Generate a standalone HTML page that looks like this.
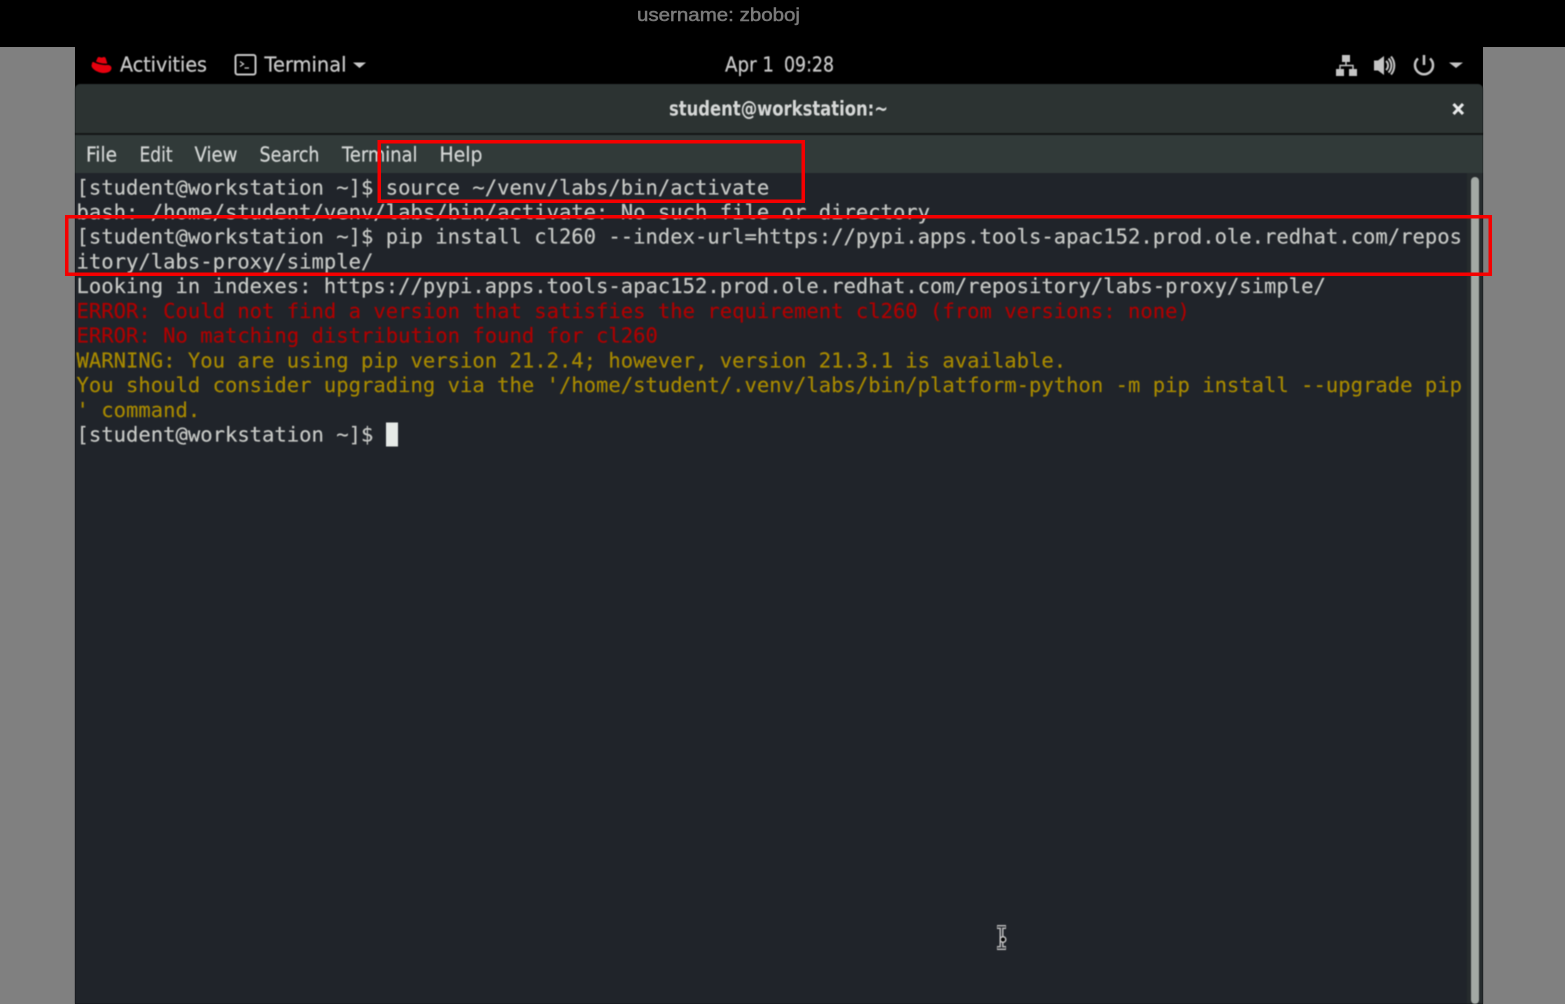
<!DOCTYPE html>
<html lang="en">
<head>
<meta charset="utf-8">
<title>Terminal</title>
<style>
html,body{margin:0;padding:0;background:#000;width:1565px;height:1004px;overflow:hidden}
svg{display:block;position:absolute;left:0;top:0}
.m{font-family:"DejaVu Sans Mono","Liberation Mono",monospace;font-size:20.55px;white-space:pre;stroke-width:.2px}
.u{font-family:"DejaVu Sans","Liberation Sans",sans-serif;font-size:20px;stroke-width:.25px}
</style>
</head>
<body>
<svg width="1565" height="1004" viewBox="0 0 1565 1004" xmlns="http://www.w3.org/2000/svg">
<defs><filter id="b" x="-2%" y="-2%" width="104%" height="104%" color-interpolation-filters="sRGB"><feGaussianBlur stdDeviation="0.45"/></filter></defs>
<rect width="1565" height="1004" fill="#000"/>
<rect x="0" y="47" width="75" height="957" fill="#808080"/>
<rect x="1483" y="47" width="82" height="957" fill="#808080"/>
<rect x="75" y="47" width="1408" height="957" fill="#000"/>
<text x="637" y="21" font-family="'Liberation Sans',sans-serif" font-size="18.4" fill="#7a7a7a" stroke="#7a7a7a" stroke-width=".5" textLength="163" lengthAdjust="spacingAndGlyphs">username: zboboj</text>
<g filter="url(#b)">
<path d="M80 84H1478a5 5 0 0 1 5 5V134H75V89a5 5 0 0 1 5-5Z" fill="#2c3332"/>
<rect x="75" y="133" width="1408" height="2" fill="#141717"/>
<rect x="75" y="135" width="1408" height="38" fill="#313a39"/>
<rect x="75" y="173" width="1408" height="831" fill="#20242a"/>
<rect x="1467" y="173" width="16" height="831" fill="#262b2d"/>
<rect x="1471" y="177" width="8" height="827" rx="4" fill="#a3a9a5"/>
<!-- top bar -->
<path d="M92 63.500C92 62 93 61.500 94.500 62.500C96 63.500 103 65.500 107 65C109.500 64.700 111.500 66 111.500 68C111.500 71.300 108 73 104 73C98 73 91.500 69 91.500 65.500Z" fill="#e6000e"/>
<path d="M96 61.500L97.500 58C98 56.800 99 56.700 100.200 57.300C101.200 57.800 102 57.800 103 57.300C104.500 56.700 105.300 57.200 105.800 58.500L107.300 63.500C103 64 99 63 96 61.500Z" fill="#e6000e"/>
<text class="u" x="120" y="71.500" fill="#c8c8c8" stroke="#c8c8c8" textLength="87" lengthAdjust="spacingAndGlyphs">Activities</text>
<rect x="235.500" y="55" width="20" height="19.500" rx="2" fill="none" stroke="#c4c4c4" stroke-width="2"/>
<path d="M240 61.500L243.500 64L240 66.500" fill="none" stroke="#c4c4c4" stroke-width="1.300"/>
<path d="M244.500 68H249" fill="none" stroke="#c4c4c4" stroke-width="1.300"/>
<text class="u" x="264.500" y="71.500" fill="#c8c8c8" stroke="#c8c8c8" textLength="82" lengthAdjust="spacingAndGlyphs">Terminal</text>
<path d="M353 62.500H366L359.500 68Z" fill="#c8c8c8"/>
<text class="u" x="725" y="71.500" fill="#c8c8c8" stroke="#c8c8c8" textLength="49" lengthAdjust="spacingAndGlyphs">Apr 1</text>
<text class="u" x="784" y="71.500" fill="#c8c8c8" stroke="#c8c8c8" textLength="50" lengthAdjust="spacingAndGlyphs">09:28</text>
<rect x="1342" y="55" width="8" height="7" fill="#c4c4c4"/>
<rect x="1336" y="69" width="8" height="7" fill="#c4c4c4"/>
<rect x="1349" y="69" width="8" height="7" fill="#c4c4c4"/>
<path d="M1346 62V66M1340 69.500V65.500H1353V69.500" fill="none" stroke="#c4c4c4" stroke-width="1.400"/>
<path d="M1374 60.500H1378L1384 56V75L1378 70.500H1374Z" fill="#c4c4c4"/>
<path d="M1386 61A6 6 0 0 1 1386 70M1388.500 58.500A10 10 0 0 1 1388.500 72.500M1391 56.500A14 14 0 0 1 1391 74.500" fill="none" stroke="#c4c4c4" stroke-width="2"/>
<path d="M1418 58.500A9 9 0 1 0 1430 58.500" fill="none" stroke="#c4c4c4" stroke-width="2.500"/>
<path d="M1424 55V65" fill="none" stroke="#c4c4c4" stroke-width="2.500"/>
<path d="M1449 62.500H1463L1456 68Z" fill="#c4c4c4"/>
<!-- title -->
<text class="u" x="669" y="115.500" fill="#d6d8d7" stroke="#d6d8d7" font-weight="bold" style="stroke-width:0" textLength="219" lengthAdjust="spacingAndGlyphs">student@workstation:~</text>
<path d="M1453.500 104L1463 114M1463 104L1453.500 114" stroke="#e8eaea" stroke-width="3" fill="none"/>
<!-- menu -->
<g class="u" fill="#d2d5d4" stroke="#d2d5d4">
<text x="86" y="161.500" textLength="31" lengthAdjust="spacingAndGlyphs">File</text>
<text x="139.500" y="161.500" textLength="33" lengthAdjust="spacingAndGlyphs">Edit</text>
<text x="194.500" y="161.500" textLength="43" lengthAdjust="spacingAndGlyphs">View</text>
<text x="259.500" y="161.500" textLength="60" lengthAdjust="spacingAndGlyphs">Search</text>
<text x="342" y="161.500" textLength="75.500" lengthAdjust="spacingAndGlyphs">Terminal</text>
<text x="439.500" y="161.500" textLength="43" lengthAdjust="spacingAndGlyphs">Help</text>
</g>
<!-- terminal -->
<g class="m" fill="#c6c8c5" stroke="#c6c8c5">
<text x="76.500" y="194.300">[student@workstation ~]$ source ~/venv/labs/bin/activate</text>
<text x="76.500" y="219">bash: /home/student/venv/labs/bin/activate: No such file or directory</text>
<text x="76.500" y="243.700">[student@workstation ~]$ pip install cl260 --index-url=https://pypi.apps.tools-apac152.prod.ole.redhat.com/repos</text>
<text x="76.500" y="268.500">itory/labs-proxy/simple/</text>
<text x="76.500" y="293.200">Looking in indexes: https://pypi.apps.tools-apac152.prod.ole.redhat.com/repository/labs-proxy/simple/</text>
<text x="76.500" y="317.900" fill="#ae0000" stroke="#ae0000">ERROR: Could not find a version that satisfies the requirement cl260 (from versions: none)</text>
<text x="76.500" y="342.700" fill="#ae0000" stroke="#ae0000">ERROR: No matching distribution found for cl260</text>
<text x="76.500" y="367.400" fill="#a68800" stroke="#a68800">WARNING: You are using pip version 21.2.4; however, version 21.3.1 is available.</text>
<text x="76.500" y="392.100" fill="#a68800" stroke="#a68800">You should consider upgrading via the '/home/student/.venv/labs/bin/platform-python -m pip install --upgrade pip</text>
<text x="76.500" y="416.900" fill="#a68800" stroke="#a68800">' command.</text>
<text x="76.500" y="441.600">[student@workstation ~]$</text>
</g>
<rect x="386" y="422.500" width="12" height="24" fill="#e6eae7"/>
<!-- I-beam cursor -->
<path d="M997 927H1006M1001.500 927V948M997 948H1006" fill="none" stroke="#c0c0c0" stroke-width="4"/>
<path d="M997.500 927H1005.500M1001.500 927V948M997.500 948H1005.500" fill="none" stroke="#20242a" stroke-width="1.200"/>
<circle cx="1003" cy="939.500" r="3.500" fill="#c5c5c5"/>
<circle cx="1003" cy="939.500" r="2" fill="#000"/>
</g>
<!-- annotation boxes -->
<rect x="379.250" y="141.750" width="424" height="59.500" fill="none" stroke="#f60000" stroke-width="3.500"/>
<rect x="66.750" y="216.750" width="1423.500" height="57.500" fill="none" stroke="#f60000" stroke-width="3.500"/>
</svg>
</body>
</html>
